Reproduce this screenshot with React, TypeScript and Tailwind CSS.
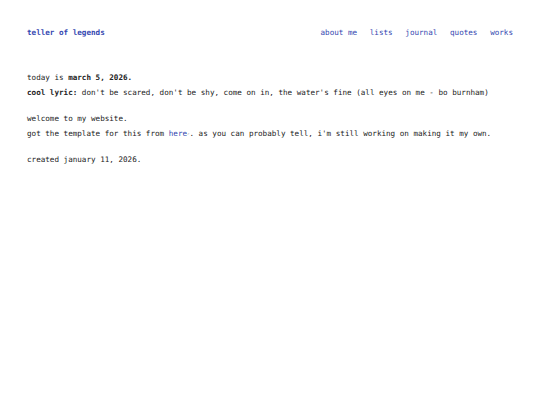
export default function App() {
  const font = { fontFamily: '"DejaVu Sans Mono", monospace' };
  return (
    <div className="min-h-[405px] w-[540px] bg-white text-[7.6px] leading-[15px] text-[#222]" style={font}>
      <div className="px-[27px] pt-[24.5px]">
        <header className="flex items-center justify-between">
          <a className="font-bold text-[#3346b0]">teller of legends</a>
          <nav className="flex gap-[12.7px] text-[#3346b0]">
            <a>about me</a>
            <a>lists</a>
            <a>journal</a>
            <a>quotes</a>
            <a>works</a>
          </nav>
        </header>
        <p className="mt-[30px]">
          today is <b>march 5, 2026.</b>
        </p>
        <p>
          <b>cool lyric:</b> don't be scared, don't be shy, come on in, the water's fine (all eyes on me - bo burnham)
        </p>
        <p className="mt-[11px]">welcome to my website.</p>
        <p>
          got the template for this from <a className="text-[#3346b0]">here</a>
          <span className="text-[4px] align-middle text-[#aaa]">↗</span>. as you can probably tell, i'm still working on making it my own.
        </p>
        <p className="mt-[11px]">created january 11, 2026.</p>
      </div>
    </div>
  );
}
